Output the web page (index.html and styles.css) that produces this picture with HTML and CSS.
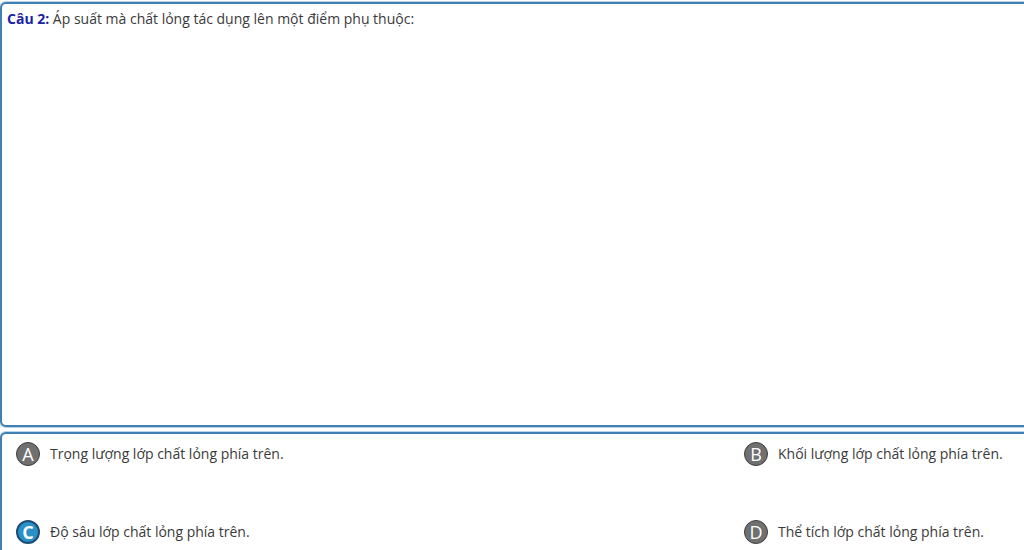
FILE: index.html
```html
<!DOCTYPE html>
<html lang="vi">
<head>
<meta charset="utf-8">
<link rel="stylesheet" href="styles.css">
</head>
<body>
<div class="page">
  <section class="panel question">
    <p class="q-text"><span class="q-label">Câu 2:</span> Áp suất mà chất lỏng tác dụng lên một điểm phụ thuộc:</p>
  </section>
  <section class="panel answers">
    <div class="answer"><span class="badge">A</span><span class="a-text">Trọng lượng lớp chất lỏng phía trên.</span></div>
    <div class="answer"><span class="badge">B</span><span class="a-text">Khối lượng lớp chất lỏng phía trên.</span></div>
    <div class="answer"><span class="badge selected">C</span><span class="a-text">Độ sâu lớp chất lỏng phía trên.</span></div>
    <div class="answer"><span class="badge">D</span><span class="a-text">Thể tích lớp chất lỏng phía trên.</span></div>
  </section>
</div>
</body>
</html>
```
FILE: styles.css
```css
html, body {
  margin: 0;
  padding: 0;
  background: #ffffff;
  overflow: hidden;
  height: 550px;
}
body {
  font-family: "Open Sans", "DejaVu Sans", sans-serif;
  font-size: 14px;
  color: #3a3a3a;
}
.page {
  width: 1040px;
  height: 550px;
  overflow: hidden;
  padding-top: 2px;
  box-sizing: border-box;
  display: flex;
  flex-direction: column;
  gap: 5px;
}
.panel {
  border: 2px solid #3f7fb3;
  border-radius: 6px;
  box-shadow: 0 0 0 1px #b9d4ea;
  background: #ffffff;
  box-sizing: border-box;
  flex: none;
}
.question {
  height: 425px;
  padding: 6px 5px;
}
.q-text {
  margin: 0;
  line-height: 18px;
}
.q-label {
  color: #1b23a6;
  font-weight: bold;
}
.answers {
  height: 140px;
  display: grid;
  grid-template-columns: 728px 1fr;
  grid-auto-rows: 78px;
  padding: 8px 0 0 14px;
}
.answer {
  display: flex;
  align-items: flex-start;
  gap: 10px;
}
.badge {
  width: 22px;
  height: 22px;
  border-radius: 50%;
  background: #707070;
  border: 1px solid #3e3e3e;
  color: #ffffff;
  font-size: 18px;
  line-height: 22px;
  text-align: center;
  flex: none;
}
.badge.selected {
  background: #2a90c8;
  border: 2px solid #1d4d73;
  width: 20px;
  height: 20px;
  line-height: 20px;
  font-weight: bold;
}
.a-text {
  line-height: 24px;
}
```
